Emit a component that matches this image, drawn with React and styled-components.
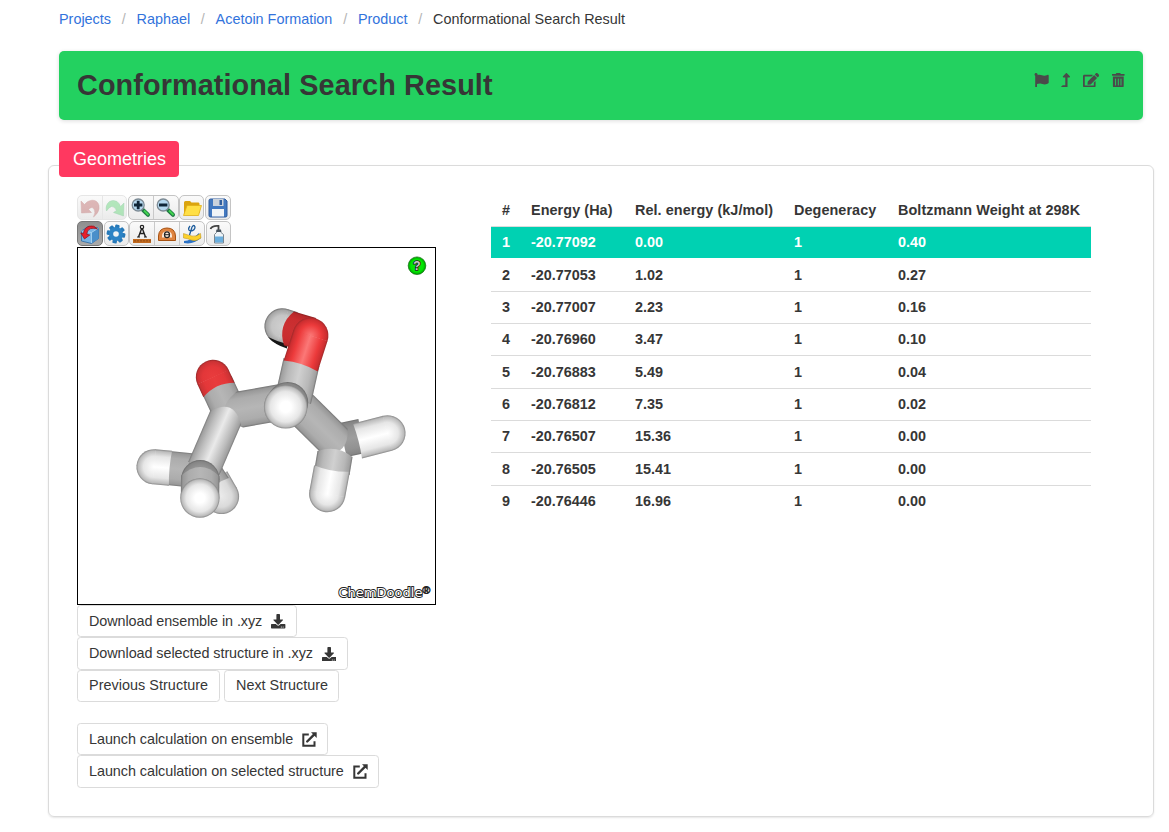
import React from "react";
import styled, { createGlobalStyle, css } from "styled-components";
import {
  FaFlag,
  FaLevelUpAlt,
  FaEdit,
  FaTrashAlt,
  FaDownload,
} from "react-icons/fa";

const GlobalStyle = createGlobalStyle`
  *, *::before, *::after { box-sizing: border-box; }
  html { overflow: hidden; }
  body {
    margin: 0;
    background: #fff;
    color: #363636;
    font-family: "Liberation Sans", Arial, sans-serif;
    font-size: 14.4px;
    line-height: 21.6px;
  }
`;

const Page = styled.main`
  width: 1169px;
  height: 832px;
  padding: 9px 15px 0 48px;
`;

const Breadcrumb = styled.nav`
  display: flex;
  height: 21px;
  padding-left: 11px;
  white-space: nowrap;
`;

const Crumb = styled.span`
  color: ${(p) => (p.$current ? "#363636" : "#3273dc")};
  &:not(:first-child)::before {
    content: "/";
    color: #b5b5b5;
    display: inline-block;
    width: 25.5px;
    text-align: center;
  }
`;

const Banner = styled.header`
  display: flex;
  justify-content: space-between;
  height: 69px;
  margin: 21px 11px 0;
  padding: 0 18px;
  border-radius: 5px;
  background: #23d160;
  box-shadow: 0 1px 4px rgba(10, 10, 10, 0.14);
`;

const Title = styled.h1`
  margin: 0;
  font-size: 28.8px;
  line-height: 68px;
  font-weight: 700;
  letter-spacing: 0.1px;
`;

const Actions = styled.div`
  display: flex;
  padding-top: 22px;
  color: #4a4a4a;
  svg { display: block; height: 14.4px; }
`;

const Action = styled.span`
  width: ${(p) => p.$w}px;
  margin-left: ${(p) => p.$gap || 0}px;
  svg { width: 100%; }
`;

const SectionTag = styled.div`
  position: relative;
  z-index: 1;
  width: 120px;
  height: 36px;
  margin: 21px 0 0 11px;
  padding-left: 1px;
  border-radius: 4px;
  background: #ff3860;
  color: #fff;
  font-size: 18px;
  line-height: 36px;
  text-align: center;
`;

const Panel = styled.section`
  display: flex;
  align-items: flex-start;
  width: 1106px;
  height: 652px;
  margin-top: -12px;
  padding: 29px 28px 0;
  border: 1px solid #dbdbdb;
  border-radius: 6px;
  box-shadow: 0 1px 2px rgba(10, 10, 10, 0.1);
`;

const ViewerColumn = styled.div`
  width: 414px;
  flex: none;
`;

const Toolbar = styled.div`
  display: flex;
  gap: ${(p) => p.$gap || 0.6}px;
  height: 25px;
  margin-bottom: 1px;
`;

const ToolGroup = styled.div`
  display: flex;
  height: 25px;
  border: 1px solid ${(p) => (p.$disabled ? "#e6e6e6" : "#c4c4c4")};
  border-radius: 5px;
  overflow: hidden;
  background: ${(p) => (p.$active ? "linear-gradient(#8f8f8f, #aaa)" : "linear-gradient(#fafafa, #ebebeb)")};
  ${(p) => p.$active && css`border-color: #777;`}
`;

const Tool = styled.span`
  width: ${(p) => p.$w || 24}px;
  height: 23px;
  display: flex;
  align-items: center;
  justify-content: center;
  &:not(:first-child) { border-left: 1px solid ${(p) => (p.$disabled ? "#e6e6e6" : "#c9c9c9")}; }
  svg { opacity: ${(p) => (p.$disabled ? 0.45 : 1)}; flex: none; }
`;

const Canvas = styled.div`
  width: 359px;
  height: 358px;
  border: 1px solid #000;
  background: #fff;
  svg { display: block; }
`;

const ButtonRow = styled.div`
  display: flex;
  gap: 4px;
  height: 32.3px;
  margin-top: ${(p) => p.$top || 0}px;
`;

const Button = styled.button`
  display: flex;
  align-items: center;
  height: 32.3px;
  width: ${(p) => p.$w}px;
  padding: 0.6px 0 0 11px;
  border: 1px solid #dbdbdb;
  border-radius: 3.6px;
  background: #fff;
  color: #363636;
  font: inherit;
  letter-spacing: ${(p) => p.$track || 0}px;
  white-space: nowrap;
  svg { margin-left: 9px; }
`;

const Table = styled.div`
  width: 600px;
  font-weight: 700;
  margin-top: -0.4px;
`;

const Row = styled.div`
  display: grid;
  grid-template-columns: 29px 104px 159px 104px 204px;
  height: 32.33px;
  border-bottom: 1px solid ${(p) => (p.$last ? "transparent" : p.$selected ? "#fff" : "#dbdbdb")};
  background: ${(p) => (p.$selected ? "#00d1b2" : "#fff")};
  color: ${(p) => (p.$selected ? "#fff" : "#363636")};
  line-height: 31px;
`;

const Cell = styled.span`
  padding: 0.3px 0 0 11px;
  white-space: nowrap;
  letter-spacing: ${(p) => (p.$head ? 0.07 : 0)}px;
`;

/* ---------- toolbar drawings ---------- */

const Icon = ({ children }) => (
  <svg width="20" height="20" viewBox="0 0 20 20">{children}</svg>
);

const UndoIcon = () => (
  <Icon>
    <path d="M1 3 L1.500 15 L11.500 14.500 L8.500 11.500 Q12 8 14 11 Q16 14.500 13.500 19 Q20 14 19 7.500 Q17.500 2 12 2.200 Q7.500 2.500 4.500 6.500Z" fill="#bf6a6a" stroke="#a55" strokeWidth=".5" />
  </Icon>
);
const RedoIcon = () => (
  <Icon>
    <path d="M19 5 L18.500 18 L8.500 14.500 L11.500 12.500 Q9.500 8 6.500 8.500 Q3.500 9.500 1.500 13 Q0 7 4.500 3.500 Q8 1.500 12 3.500 Q14 5 15.500 8.500Z" fill="#63d677" stroke="#4a6" strokeWidth=".5" />
  </Icon>
);
const Magnifier = ({ plus }) => (
  <Icon>
    <path d="M12 12 L17 16.800" stroke="#217a45" strokeWidth="4" strokeLinecap="round" />
    <path d="M13 12.500 L17.500 17" stroke="#43d64f" strokeWidth="1.800" />
    <circle cx="7.200" cy="7" r="6" fill="#b5d8ef" stroke="#7d8b95" strokeWidth="1.300" />
    <path d={plus ? "M3 7H11.400M7.200 2.800V11.200" : "M3 7H11.400"} stroke="#102638" strokeWidth="2.800" />
  </Icon>
);
const FolderIcon = () => (
  <Icon>
    <path d="M2 17 V4.500 Q2 3 3.500 3 H8 L9.500 4.500 H16.500 Q17.500 4.500 17.500 6 V15Z" fill="#dba40f" />
    <path d="M1.500 17.500 L5 7.500 H19.500 L16.500 17.500Z" fill="#ffdf45" stroke="#e0ae16" strokeWidth=".8" />
  </Icon>
);
const SaveIcon = () => (
  <Icon>
    <path d="M1 2.500 Q1 1 2.500 1 H17 L19 3 V17.500 Q19 19 17.500 19 H2.500 Q1 19 1 17.500Z" fill="#4379c0" stroke="#2f5b9c" />
    <rect x="5" y="1" width="10.500" height="7" fill="#ccd3dc" />
    <rect x="11.500" y="2" width="2.500" height="5" fill="#315f9f" />
    <rect x="4" y="11" width="12" height="7.500" fill="#f1f4f7" />
  </Icon>
);
const CubeIcon = () => (
  <Icon>
    <path d="M1.500 7 L8 2.500 L18.500 4 V14.500 L11.500 19.500 L1.500 17Z" fill="#77b4e4" stroke="#2c6ba5" strokeWidth=".8" />
    <path d="M11.500 8.500 L18.500 4 V14.500 L11.500 19.500Z" fill="#4a8fca" />
    <path d="M1.500 7 L11.500 8.500 L18.500 4 M11.500 8.500 V19" fill="none" stroke="#b4dbf5" strokeWidth=".8" />
    <path d="M17.500 5 Q14 0.800 9 2.200 Q4 4 3.400 9.500 L0.800 9 L4.500 15 L9.800 11 L6.800 10.300 Q7 5.800 10.500 4.600 Q14 3.700 17.500 5Z" fill="#e8202c" stroke="#8f1018" strokeWidth=".7" />
  </Icon>
);
const GearIcon = () => (
  <Icon>
    {[10, 55, 100, 145].map((a) => (
      <rect key={a} x="7.800" y="0.600" width="4.400" height="18.800" rx="1" fill="#2779b8" transform={`rotate(${a} 10 10)`} />
    ))}
    <circle cx="10" cy="10" r="7" fill="#2c83c5" />
    <circle cx="10" cy="10" r="2.800" fill="#f0f3f5" />
  </Icon>
);
const DistanceIcon = () => (
  <Icon>
    <rect x="1" y="15" width="18" height="4" fill="#c16a20" />
    <path d="M3 16v1.500M6 16v1.500M9 16v1.500M12 16v1.500M15 16v1.500M18 16v1.500" stroke="#71370c" strokeWidth=".8" />
    <path d="M6.500 13 L9.500 5 H10.500 L13.500 13 M8 9.500 H12" fill="none" stroke="#222" strokeWidth="1.400" />
    <path d="M5 13 H8 M12 13 H15" stroke="#222" />
    <circle cx="10" cy="3" r="1.700" fill="none" stroke="#222" strokeWidth="1.200" />
  </Icon>
);
const AngleIcon = () => (
  <Icon>
    <path d="M1.500 16.500 V12 Q2 4 10 4 Q18 4 18.500 12 V16.500Z" fill="#df8440" stroke="#a75213" />
    <path d="M5 13.500 Q4.500 7.300 10 7.300 Q15.500 7.300 15 13.500Z" fill="#faeadb" />
    <ellipse cx="10" cy="10.700" rx="2.500" ry="2.900" fill="none" stroke="#222" strokeWidth="1.300" />
    <path d="M8 10.700H12" stroke="#222" />
  </Icon>
);
const TorsionIcon = () => (
  <Icon>
    <path d="M2 17 Q9 17 17 9 L19 14 Q11 21 2 19Z" fill="#2b72c5" />
    <path d="M1.500 9.500 Q6 11 10 12 Q14 13 18.500 9.500 L19 14 Q14 18 9 16 Q6 14.500 1.500 14Z" fill="#fbd12c" stroke="#bd8d12" strokeWidth=".5" />
    <path d="M8 2 Q5 6 8.500 7 Q13 6.500 13 3 Q12 0 10 3 L7.500 11" fill="none" stroke="#1d5c9c" strokeWidth="1.300" />
  </Icon>
);
const BottleIcon = () => (
  <Icon>
    <path d="M2.500 5 Q4 1.500 10.500 2 V6" fill="none" stroke="#444" strokeWidth="1.800" />
    <path d="M8.500 6.500 H13 V8.500 L15.500 10.500 V19 H6.500 V10.500 L8.500 8.500Z" fill="#eef4f8" stroke="#7b8791" />
    <path d="M7 12.500H15V18.500H7Z" fill="#6aaedd" />
    <rect x="8.500" y="5.500" width="4.500" height="2.500" fill="#46525c" />
  </Icon>
);

const LaunchIcon = () => (
  <svg width="15" height="15" viewBox="0 0 15 15">
    <path d="M6.800 2.600 H1.300 V13.700 H12.500 V9.300" fill="none" stroke="#363636" strokeWidth="2" />
    <path d="M5.200 9.500 L12.300 2.400" stroke="#363636" strokeWidth="2.400" strokeLinecap="round" />
    <path d="M9 0.200 H14.700 V6Z" fill="#363636" />
  </svg>
);

/* ---------- stick molecule ---------- */

/* edge, inner edge, middle, highlight */
const SHADES = {
  carbon: ["#747474", "#989898", "#acacac", "#b6b6b6"],
  bright: ["#7a7a7a", "#a0a0a0", "#bcbcbc", "#eaeaea"],
  light: ["#747474", "#a0a0a0", "#b8b8b8", "#d0d0d0"],
  shade: ["#6a6a6a", "#858585", "#929292", "#9d9d9d"],
  hydrogen: ["#858585", "#bcbcbc", "#e6e6e6", "#ffffff"],
  pale: ["#858585", "#b8b8b8", "#dadada", "#eaeaea"],
  dim: ["#6c6c6c", "#a5a5a5", "#c5c5c5", "#d0d0d0"],
  oxygen: ["#a02829", "#cc2e30", "#ec3a3b", "#fb7877"],
  flatOxygen: ["#96292a", "#cc3234", "#e33739", "#e93c3d"],
  darkOxygen: ["#8f1f20", "#b8292b", "#c92d2f", "#cb3032"],
};

const Tube = ({ id, from, to, r, tone, start = 0, end = 0, cap }) => {
  const s = SHADES[tone];
  const [ax, ay] = from;
  const [bx, by] = to;
  const len = Math.hypot(bx - ax, by - ay);
  const dx = (bx - ax) / len;
  const dy = (by - ay) / len;
  const nx = -dy * r;
  const ny = dx * r;
  const body = `M${ax + nx} ${ay + ny} L${bx + nx} ${by + ny} Q${bx + dx * end * 2} ${by + dy * end * 2} ${bx - nx} ${by - ny} L${ax - nx} ${ay - ny} Q${ax + dx * start * 2} ${ay + dy * start * 2} ${ax + nx} ${ay + ny}Z`;
  const ox = dx * 0.4;
  const oy = dy * 0.4;
  const half = `M${ax + nx + ox} ${ay + ny + oy} L${ax + nx} ${ay + ny} A${r} ${r} 0 0 1 ${ax - nx} ${ay - ny} L${ax - nx + ox} ${ay - ny + oy}Z`;
  return (
    <>
      <linearGradient id={id} gradientUnits="userSpaceOnUse" x1={ax + nx} y1={ay + ny} x2={ax - nx} y2={ay - ny}>
        {[0, 1, 2, 3, 2, 1, 0].map((k, i) => (
          <stop key={i} offset={[0, 0.05, 0.2, 0.5, 0.8, 0.95, 1][i]} stopColor={s[k]} />
        ))}
      </linearGradient>
      <path d={body} fill={`url(#${id})`} />
      {cap && (
        <>
          <radialGradient id={`${id}-cap`} gradientUnits="userSpaceOnUse" cx={ax} cy={ay} r={r}>
            <stop offset="0" stopColor={s[3]} />
            <stop offset="0.6" stopColor={s[2]} />
            <stop offset="0.9" stopColor={s[1]} />
            <stop offset="1" stopColor={s[0]} />
          </radialGradient>
          <path d={half} fill={`url(#${id}-cap)`} />
        </>
      )}
    </>
  );
};

const Ball = ({ id, at, r, tone }) => {
  const s = SHADES[tone];
  return (
    <>
      <radialGradient id={id}>
        <stop offset="0" stopColor={s[3]} />
        <stop offset="0.25" stopColor={s[3]} />
        <stop offset="0.7" stopColor={s[2]} />
        <stop offset="0.92" stopColor={s[1]} />
        <stop offset="1" stopColor={s[0]} />
      </radialGradient>
      <circle cx={at[0]} cy={at[1]} r={r} fill={`url(#${id})`} />
    </>
  );
};

const Molecule = () => (
  <g>
    {/* hydroxyl hydrogen */}
    <Tube id="oh-h" cap from={[282.5, 326.3]} to={[292, 329.500]} r={18.1} tone="dim" />
    <path d="M268 337 Q275 345 287 348.500 L287 344 Q276 341 268 337Z" fill="#161616" />
    <Tube id="oh-o" from={[289, 328.500]} to={[311, 335]} r={17.6} tone="darkOxygen" start={-6} />

    {/* carbonyl oxygen */}
    <Tube id="co-c" from={[216, 383]} to={[229, 411]} r={17.1} tone="carbon" />
    <Tube id="co-o" cap from={[213, 377]} to={[219, 390]} r={17.2} tone="flatOxygen" end={-4} />

    {/* carbon chain */}
    <Tube id="c1c3" from={[240, 409.500]} to={[294, 400]} r={18.2} tone="carbon" start={-16} />
    <Tube id="h4-c" from={[343, 440]} to={[362, 436]} r={17.5} tone="shade" />
    <Tube id="c3c4" from={[295, 402]} to={[335, 441.500]} r={17.9} tone="carbon" end={10} />

    {/* methyl hydrogen at the back */}
    <Tube id="h3-h" cap from={[221.500, 496.500]} to={[212, 480]} r={17.6} tone="pale" />
    <Tube id="h3-c" from={[215, 487]} to={[204, 470]} r={16.5} tone="carbon" start={2} />

    {/* methyl hydrogen on the left */}
    <Tube id="h1-c" from={[168, 468]} to={[203, 471.500]} r={17.2} tone="carbon" />
    <Tube id="h1-h" cap from={[154, 466.800]} to={[170.500, 468.300]} r={17.6} tone="hydrogen" end={-1} />
    <Tube id="c1c2" from={[225.500, 418]} to={[204, 468]} r={16.9} tone="bright" start={-11} end={8} />

    {/* methyl hydrogen at the front */}
    <Ball id="c2-b" at={[200.300, 479.300]} r={19.2} tone="shade" />
    <Tube id="h2-c" from={[200.200, 476]} to={[200, 498]} r={19.2} tone="carbon" start={-9} />
    <Ball id="h2-b" at={[199.900, 498]} r={19.7} tone="hydrogen" />

    {/* hydroxyl oxygen */}
    <Tube id="ho-c" from={[301.500, 362]} to={[293, 400]} r={18.4} tone="light" />
    <Tube id="ho-o" cap from={[310.500, 335.500]} to={[300.700, 366]} r={17.9} tone="oxygen" end={-2} />

    {/* terminal carbon and its hydrogens */}
    <Tube id="h4-h" cap from={[387.500, 433.300]} to={[357.500, 441.000]} r={18.1} tone="hydrogen" end={-1} />
    <Tube id="h5-c" from={[335, 454]} to={[332, 472]} r={17.8} tone="light" start={-5} />
    <Tube id="h5-h" cap from={[327.300, 494]} to={[332, 468.500]} r={18.2} tone="hydrogen" end={-2} />

    {/* hydrogen facing the viewer */}
    <Ball id="c3-b" at={[287.700, 402.500]} r={20.5} tone="shade" />
    <Ball id="h6-b" at={[285.700, 406.800]} r={21.8} tone="hydrogen" />
  </g>
);

const Viewer = () => (
  <svg width="357" height="356" viewBox="78 248 357 356">
    <Molecule />
    <radialGradient id="help">
      <stop offset="0" stopColor="#12df12" />
      <stop offset=".7" stopColor="#00e800" />
      <stop offset="1" stopColor="#00a000" />
    </radialGradient>
    <circle cx="417" cy="265.700" r="8.800" fill="url(#help)" stroke="#0a6c0a" strokeWidth=".7" />
    <text x="417" y="269.700" textAnchor="middle" fontFamily="Liberation Sans, sans-serif" fontSize="12" fontWeight="700" fill="#ccc" stroke="#222" strokeWidth="1.600" paintOrder="stroke">?</text>
    <text x="338.500" y="596.500" textLength="84" lengthAdjust="spacingAndGlyphs" fontFamily="DejaVu Sans, sans-serif" fontSize="12.500" fill="#fff" stroke="#222" strokeWidth="1.800" paintOrder="stroke">ChemDoodle</text>
    <text x="422.200" y="594" fontFamily="Liberation Sans, sans-serif" fontSize="11" fontWeight="700" fill="#222" stroke="#222" strokeWidth=".5">®</text>
  </svg>
);

const COLUMNS = ["#", "Energy (Ha)", "Rel. energy (kJ/mol)", "Degeneracy", "Boltzmann Weight at 298K"];
const CONFORMERS = [
  ["1", "-20.77092", "0.00", "1", "0.40"],
  ["2", "-20.77053", "1.02", "1", "0.27"],
  ["3", "-20.77007", "2.23", "1", "0.16"],
  ["4", "-20.76960", "3.47", "1", "0.10"],
  ["5", "-20.76883", "5.49", "1", "0.04"],
  ["6", "-20.76812", "7.35", "1", "0.02"],
  ["7", "-20.76507", "15.36", "1", "0.00"],
  ["8", "-20.76505", "15.41", "1", "0.00"],
  ["9", "-20.76446", "16.96", "1", "0.00"],
];

export default function App() {
  return (
    <Page>
      <GlobalStyle />
      <Breadcrumb>
        <Crumb>Projects</Crumb>
        <Crumb>Raphael</Crumb>
        <Crumb>Acetoin Formation</Crumb>
        <Crumb>Product</Crumb>
        <Crumb $current>Conformational Search Result</Crumb>
      </Breadcrumb>

      <Banner>
        <Title>Conformational Search Result</Title>
        <Actions>
          <Action $w={15}><FaFlag /></Action>
          <Action $w={9} $gap={12}><FaLevelUpAlt /></Action>
          <Action $w={16.2} $gap={13.5}><FaEdit /></Action>
          <Action $w={12.6} $gap={13}><FaTrashAlt /></Action>
        </Actions>
      </Banner>

      <SectionTag>Geometries</SectionTag>
      <Panel>
        <ViewerColumn>
          <Toolbar>
            <ToolGroup $disabled>
              <Tool $disabled><UndoIcon /></Tool>
              <Tool $disabled><RedoIcon /></Tool>
            </ToolGroup>
            <ToolGroup>
              <Tool><Magnifier plus /></Tool>
              <Tool $w={25}><Magnifier /></Tool>
            </ToolGroup>
            <ToolGroup><Tool $w={23}><FolderIcon /></Tool></ToolGroup>
            <ToolGroup><Tool><SaveIcon /></Tool></ToolGroup>
          </Toolbar>
          <Toolbar>
            <ToolGroup $active><Tool><CubeIcon /></Tool></ToolGroup>
            <ToolGroup><Tool $w={23}><GearIcon /></Tool></ToolGroup>
            <ToolGroup>
              <Tool $w={24}><DistanceIcon /></Tool>
              <Tool $w={25}><AngleIcon /></Tool>
              <Tool $w={25}><TorsionIcon /></Tool>
            </ToolGroup>
            <ToolGroup><Tool $w={23}><BottleIcon /></Tool></ToolGroup>
          </Toolbar>
          <Canvas><Viewer /></Canvas>
          <ButtonRow>
            <Button $w={220} $track={-0.08}>Download ensemble in .xyz<FaDownload size={14.4} /></Button>
          </ButtonRow>
          <ButtonRow>
            <Button $w={271} $track={-0.07}>Download selected structure in .xyz<FaDownload size={14.4} /></Button>
          </ButtonRow>
          <ButtonRow>
            <Button $w={143} $track={0.04}>Previous Structure</Button>
            <Button $w={115}>Next Structure</Button>
          </ButtonRow>
          <ButtonRow $top={21.3}>
            <Button $w={251} $track={-0.05}>Launch calculation on ensemble<LaunchIcon /></Button>
          </ButtonRow>
          <ButtonRow>
            <Button $w={302} $track={-0.05}>Launch calculation on selected structure<LaunchIcon /></Button>
          </ButtonRow>
        </ViewerColumn>

        <Table>
          <Row>
            {COLUMNS.map((c) => <Cell $head key={c}>{c}</Cell>)}
          </Row>
          {CONFORMERS.map((row, i) => (
            <Row key={row[0]} $selected={i === 0} $last={i === CONFORMERS.length - 1}>
              {row.map((v, j) => <Cell key={j}>{v}</Cell>)}
            </Row>
          ))}
        </Table>
      </Panel>
    </Page>
  );
}
